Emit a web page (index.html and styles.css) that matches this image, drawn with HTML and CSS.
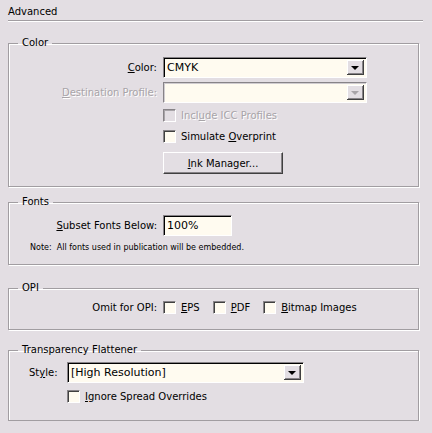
FILE: index.html
```html
<!DOCTYPE html>
<html lang="en">
<head>
    <meta charset="UTF-8">
    <title>Advanced</title>
    <link rel="stylesheet" href="styles.css">
</head>
<body>
<div class="panel">
    <div class="panel-title">Advanced</div>
    <div class="sep"></div>

    <fieldset class="group group-color">
        <legend>Color</legend>
        <div class="form">
            <label class="lbl"><u>C</u>olor:</label>
            <div class="select wide"><span class="value">CMYK</span><span class="arrow"></span></div>

            <label class="lbl disabled"><u>D</u>estination Profile:</label>
            <div class="select wide off"><span class="value"></span><span class="arrow"></span></div>

            <span></span>
            <div class="check disabled"><span class="box"></span><span>Incl<u>u</u>de ICC Profiles</span></div>

            <span></span>
            <div class="check"><span class="box"></span><span>Simulate <u>O</u>verprint</span></div>

            <span></span>
            <div><button class="btn"><u>I</u>nk Manager...</button></div>
        </div>
    </fieldset>

    <fieldset class="group group-fonts">
        <legend>Fonts</legend>
        <div class="form">
            <label class="lbl"><u>S</u>ubset Fonts Below:</label>
            <div class="field">100%</div>
        </div>
        <p class="note">Note:&nbsp; All fonts used in publication will be embedded.</p>
    </fieldset>

    <fieldset class="group group-opi">
        <legend>OPI</legend>
        <div class="form">
            <label class="lbl">Omit for OPI:</label>
            <div class="checks">
                <div class="check"><span class="box"></span><span><u>E</u>PS</span></div>
                <div class="check"><span class="box"></span><span><u>P</u>DF</span></div>
                <div class="check"><span class="box"></span><span><u>B</u>itmap Images</span></div>
            </div>
        </div>
    </fieldset>

    <fieldset class="group group-tf">
        <legend>Transparency Flattener</legend>
        <div class="form-tf">
            <label class="lbl">St<u>y</u>le:</label>
            <div class="select"><span class="value">[High Resolution]</span><span class="arrow"></span></div>
            <span></span>
            <div class="check"><span class="box"></span><span><u>I</u>gnore Spread Overrides</span></div>
        </div>
    </fieldset>
</div>
</body>
</html>
```

FILE: styles.css
```css
body {
    margin: 0;
    background-color: #e3dee3;
    font-family: "DejaVu Sans", Tahoma, sans-serif;
    font-size: 10px;
    color: #000;
}

.panel {
    width: 415px;
    padding: 5px 0 0 8px;
}

.panel-title {
    height: 14px;
    line-height: 14px;
}

.sep {
    height: 1px;
    margin-top: 1px;
    background-color: #a19da1;
    border-bottom: 1px solid #fff;
}

.group {
    width: 411px;
    box-sizing: border-box;
    margin: 0;
    padding: 0;
    border: 1px solid #a19da1;
    box-shadow: inset 1px 1px 0 #fff, 1px 1px 0 #fff;
}

.group legend {
    margin-left: 9px;
    padding: 0 4px 0 4px;
    height: 12px;
    line-height: 12px;
}

.group-color {
    margin-top: 15px;
    height: 150px;
    padding-top: 8px;
}

.group-fonts {
    margin-top: 9px;
    height: 69px;
    padding-top: 7px;
}

.group-opi {
    margin-top: 17px;
    height: 48px;
    padding-top: 5px;
}

.group-tf {
    margin-top: 14px;
    height: 77px;
    padding-top: 6px;
}

.form {
    display: grid;
    grid-template-columns: 148px 1fr;
    column-gap: 6px;
    row-gap: 4px;
    align-items: center;
}

.form-tf {
    display: grid;
    grid-template-columns: 32px 1fr;
    column-gap: 6px;
    row-gap: 5px;
    align-items: center;
    padding-left: 20px;
}

.lbl {
    text-align: right;
    white-space: nowrap;
}

.form-tf .lbl {
    text-align: left;
}

.disabled {
    color: #a8a4a8;
    text-shadow: 1px 1px 0 #fff;
}

.select {
    display: flex;
    width: 237px;
    height: 21px;
    box-sizing: border-box;
    border: 1px solid;
    border-color: #878387 #fff #fff #878387;
    background-color: #fffbf0;
    box-shadow: inset 1px 1px 0 #000;
}

.select.wide {
    width: 204px;
}

.select.off {
    box-shadow: inset 1px 1px 0 #d0ccd0;
}

.select .value {
    flex: 1;
    padding: 3px 0 0 3px;
    font-size: 11px;
}

.select .arrow {
    position: relative;
    width: 16px;
    margin: 2px 2px 2px 0;
    background-color: #e3dee3;
    border-right: 1px solid #404040;
    border-bottom: 1px solid #404040;
    box-shadow: inset 1px 1px 0 #fff, inset -1px -1px 0 #878387;
}

.select .arrow::after {
    content: "";
    position: absolute;
    left: 4px;
    top: 6px;
    border-left: 4px solid transparent;
    border-right: 4px solid transparent;
    border-top: 4px solid #000;
}

.select.off .arrow::after {
    border-top-color: #a8a4a8;
}

.field {
    width: 69px;
    height: 21px;
    box-sizing: border-box;
    border: 1px solid;
    border-color: #878387 #fff #fff #878387;
    background-color: #fffbf0;
    box-shadow: inset 1px 1px 0 #000;
    padding: 3px 0 0 3px;
    font-size: 11px;
}

.check {
    display: flex;
    align-items: center;
    height: 17px;
    white-space: nowrap;
}

.check .box {
    width: 13px;
    height: 13px;
    box-sizing: border-box;
    margin-right: 5px;
    border: 1px solid;
    border-color: #878387 #fff #fff #878387;
    background-color: #fffbf0;
    box-shadow: inset 1px 1px 0 #404040;
}

.check.disabled .box {
    background-color: #e3dee3;
    box-shadow: inset 1px 1px 0 #a8a4a8;
}

.checks {
    display: flex;
    gap: 13px;
}

.btn {
    width: 120px;
    height: 22px;
    margin-top: 3px;
    font-family: inherit;
    font-size: 10px;
    color: #000;
    background-color: #e3dee3;
    border: 1px solid;
    border-color: #fff #404040 #404040 #fff;
    box-shadow: inset -1px -1px 0 #878387;
    padding: 0;
}

.note {
    margin: 7px 0 0 21px;
    font-size: 8px;
}
```
